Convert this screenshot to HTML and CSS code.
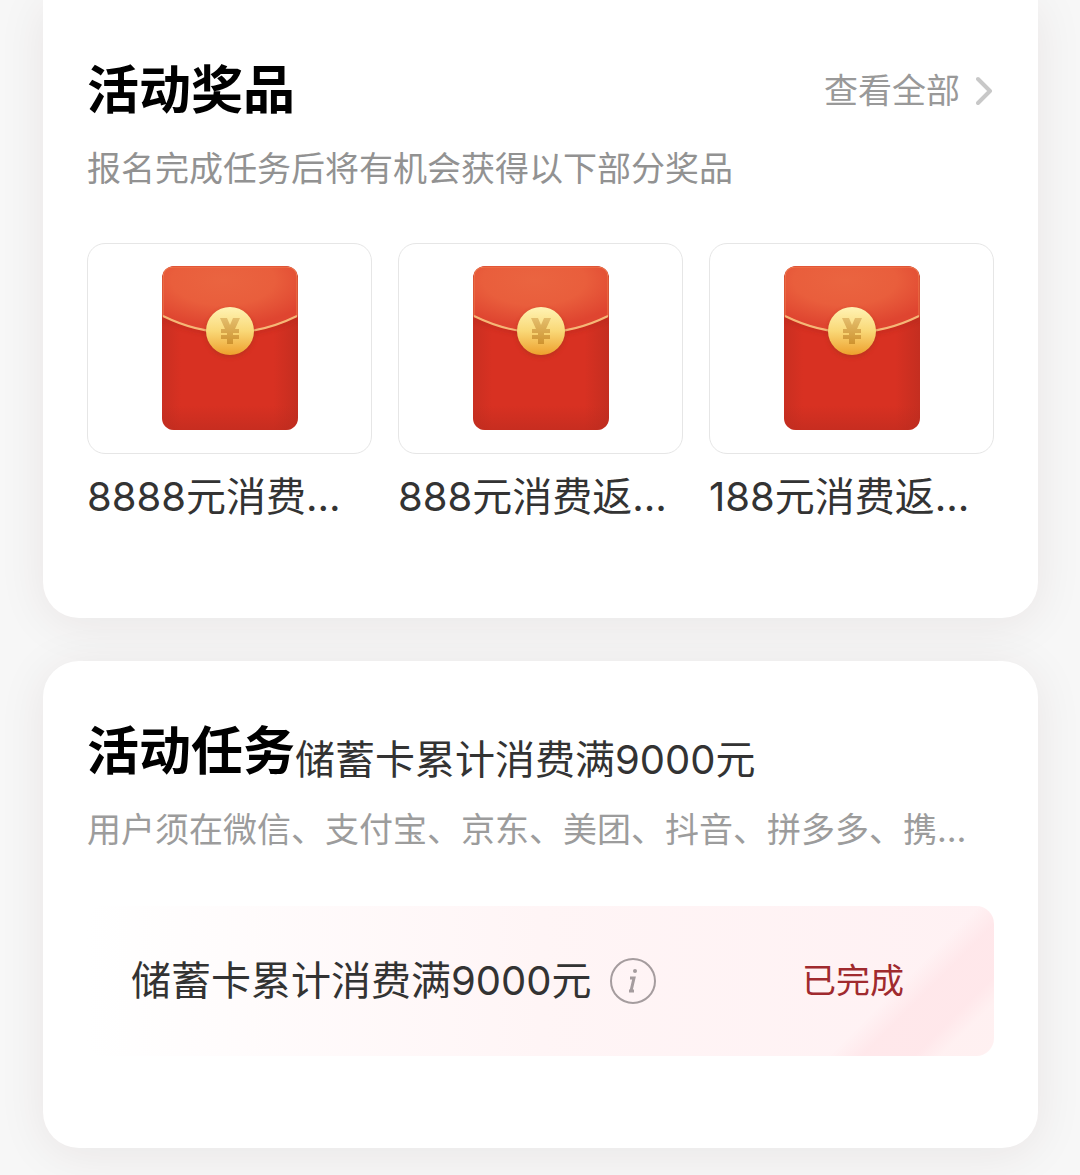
FILE: index.html
```
<!DOCTYPE html>
<html lang="zh-CN">

<head>
    <meta charset="UTF-8">
    <meta name="viewport" content="width=device-width, initial-scale=1.0">
    <title>活动奖品</title>
    <link rel="stylesheet" href="styles.css">
</head>

<body>
    <!-- 红包图标 -->
    <svg class="sprite" aria-hidden="true">
        <defs>
            <linearGradient id="bodyFill" x1="0" y1="0" x2="1" y2="0">
                <stop offset="0" stop-color="#c92f21" />
                <stop offset="0.14" stop-color="#d83122" />
                <stop offset="0.82" stop-color="#d83122" />
                <stop offset="1" stop-color="#c42e20" />
            </linearGradient>
            <linearGradient id="bodyShade" x1="0" y1="0" x2="0" y2="1">
                <stop offset="0.85" stop-color="#b92a1e" stop-opacity="0" />
                <stop offset="1" stop-color="#b92a1e" stop-opacity="0.55" />
            </linearGradient>
            <radialGradient id="flapFill" cx="0.45" cy="0.2" r="0.7">
                <stop offset="0" stop-color="#ea6440" />
                <stop offset="0.55" stop-color="#e95e3c" />
                <stop offset="1" stop-color="#df4530" />
            </radialGradient>
            <linearGradient id="coinFill" x1="0" y1="0" x2="0" y2="1">
                <stop offset="0" stop-color="#fff3b4" />
                <stop offset="0.5" stop-color="#f9d877" />
                <stop offset="1" stop-color="#eda02d" />
            </linearGradient>
            <linearGradient id="yenFill" gradientUnits="userSpaceOnUse" x1="0" y1="52" x2="0" y2="78">
                <stop offset="0" stop-color="#e3bd6c" />
                <stop offset="1" stop-color="#cf932f" />
            </linearGradient>
            <filter id="soft" x="-30%" y="-30%" width="160%" height="160%">
                <feGaussianBlur stdDeviation="2" />
            </filter>
        </defs>
        <symbol id="packet" viewBox="0 0 136 165">
            <rect width="136" height="164" rx="12" fill="url(#bodyFill)" />
            <rect width="136" height="164" rx="12" fill="url(#bodyShade)" />
            <path d="M1 53Q68 83 135 53" fill="none" stroke="#a9241a" stroke-width="3" opacity="0.5" filter="url(#soft)" />
            <path d="M1 12Q1 1 12 1H124Q135 1 135 12V50Q68 83 1 50Z" fill="url(#flapFill)" stroke="#ee7a4c" stroke-width="1" />
            <path d="M1 50Q68 83 135 50" fill="none" stroke="#f5b777" stroke-width="2" />
            <circle cx="68" cy="67" r="24" fill="#a8321a" opacity="0.6" filter="url(#soft)" />
            <circle cx="68" cy="65" r="24" fill="url(#coinFill)" />
            <path d="M58 52H65L68 59L71 52H78L73 63H77V67H71V69H77V73H71V78H65V73H59V69H65V67H59V63H63Z" fill="url(#yenFill)" />
        </symbol>
    </svg>

    <main class="page">
        <section class="card prizes">
            <div class="card-head">
                <h2>活动奖品</h2>
                <a class="view-all" href="#all">查看全部
                    <svg class="chevron" viewBox="0 0 18 30" aria-hidden="true">
                        <path d="M2 3L14 15L2 27" />
                    </svg>
                </a>
            </div>
            <p class="desc">报名完成任务后将有机会获得以下部分奖品</p>
            <ul class="prize-list">
                <li>
                    <div class="prize-pic"><svg class="packet"><use href="#packet" /></svg></div>
                    <p class="prize-name">8888元消费…</p>
                </li>
                <li>
                    <div class="prize-pic"><svg class="packet"><use href="#packet" /></svg></div>
                    <p class="prize-name">888元消费返…</p>
                </li>
                <li>
                    <div class="prize-pic"><svg class="packet"><use href="#packet" /></svg></div>
                    <p class="prize-name">188元消费返…</p>
                </li>
            </ul>
        </section>

        <section class="card tasks">
            <div class="card-head task-head">
                <h2>活动任务</h2>
                <span class="task-title">储蓄卡累计消费满9000元</span>
            </div>
            <p class="desc light">用户须在微信、支付宝、京东、美团、抖音、拼多多、携…</p>
            <div class="task-row">
                <span class="task-name">储蓄卡累计消费满9000元</span>
                <button class="info" type="button" aria-label="任务说明">
                    <svg viewBox="0 0 46 46" aria-hidden="true">
                        <circle class="ring" cx="23" cy="23" r="22" />
                        <circle class="dot" cx="25" cy="13" r="2" />
                        <path class="stem" d="M20 20H24L21 33M19 33H24" />
                    </svg>
                </button>
                <span class="status">已完成</span>
            </div>
        </section>
    </main>
</body>

</html>
```
FILE: styles.css
```
* {
    box-sizing: border-box;
}

body {
    margin: 0;
    background: #f7f7f7;
    font-family: Inter, "Noto Sans CJK SC", sans-serif;
    color: #333;
}

h2,
p,
ul {
    margin: 0;
    padding: 0;
}

.sprite {
    position: absolute;
    width: 0;
    height: 0;
}

.page {
    display: flex;
    flex-direction: column;
    gap: 43px;
    padding: 0 42px 27px 43px;
    overflow: hidden;
}

.card {
    padding: 53px 44px 92px;
    border-radius: 36px;
    background: #fff;
    box-shadow: 0 6px 48px rgba(70, 30, 20, 0.08);
}

.prizes {
    padding-bottom: 97px;
    border-radius: 0 0 36px 36px;
}

.card-head {
    display: flex;
    align-items: center;
    justify-content: space-between;
    line-height: 76px;
}

h2 {
    font-size: 52px;
    font-weight: 700;
    color: #000;
}

.view-all {
    display: flex;
    align-items: center;
    gap: 16px;
    font-size: 34px;
    color: #999;
    text-decoration: none;
}

.chevron {
    width: 18px;
    height: 30px;
}

.chevron path {
    fill: none;
    stroke: #c8c8c8;
    stroke-width: 4;
    stroke-linecap: round;
    stroke-linejoin: round;
}

.desc {
    margin-top: 16px;
    font-size: 34px;
    line-height: 48px;
    color: #929292;
    white-space: nowrap;
}

.light {
    color: #9c9c9c;
}

.prize-list {
    display: grid;
    grid-template-columns: repeat(3, 1fr);
    gap: 26px;
    margin-top: 50px;
    list-style: none;
}

.prize-pic {
    display: flex;
    justify-content: center;
    padding: 22px 0;
    border: 1px solid #e6e6e6;
    border-radius: 18px;
}

.packet {
    width: 136px;
    height: 165px;
}

.prize-name {
    margin-top: 19px;
    font-size: 40px;
    line-height: 48px;
    white-space: nowrap;
}

.task-head {
    align-items: flex-end;
    justify-content: flex-start;
}

.task-title,
.task-name {
    font-size: 40px;
    line-height: 60px;
    white-space: nowrap;
}

.task-row {
    display: flex;
    align-items: center;
    height: 150px;
    margin-top: 52px;
    padding: 0 90px 0 44px;
    border-radius: 18px;
    background:
        linear-gradient(135deg, transparent 50%, rgba(255, 222, 226, 0.5) 60%, rgba(255, 222, 226, 0.5) 76%, rgba(255, 240, 240, 0.6) 84%) right / 180px 100% no-repeat,
        linear-gradient(90deg, #fff, #fff5f6 50%, #fff1f3);
}

.info {
    width: 46px;
    height: 46px;
    margin-left: 18px;
    padding: 0;
    border: 0;
    background: none;
}

.info svg {
    display: block;
}

.info .ring,
.info .stem {
    fill: none;
    stroke: #a59c9e;
    stroke-width: 2;
}

.info .stem {
    stroke-width: 3;
}

.info .dot {
    fill: #a59c9e;
}

.status {
    margin-left: auto;
    font-size: 34px;
    line-height: 48px;
    color: #a02a2e;
}
```
